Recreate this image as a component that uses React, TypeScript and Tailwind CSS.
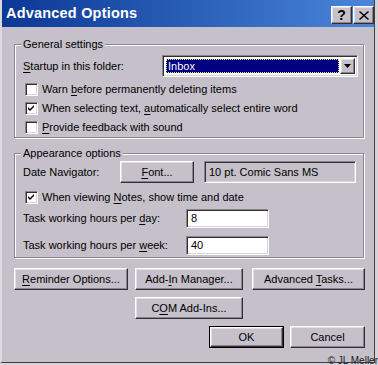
import React from "react";

const raised =
  "border border-t-white border-l-white border-r-[#303030] border-b-[#303030] shadow-[inset_-1px_-1px_0_#8a8590,inset_1px_1px_0_#e2dee6]";
const sunken =
  "border border-t-[#8a8590] border-l-[#8a8590] border-r-white border-b-white shadow-[inset_1px_1px_0_#303030,inset_-1px_-1px_0_#d8d4dc]";

function U({ children }: { children: React.ReactNode }) {
  return <span className="underline decoration-1 underline-offset-[2px]">{children}</span>;
}

function Check({ checked }: { checked?: boolean }) {
  return (
    <div className={`w-[13px] h-[13px] bg-white shrink-0 flex items-center justify-center ${sunken}`}>
      {checked && (
        <svg width="7" height="7" viewBox="0 0 7 7">
          <path d="M0 2 L2 4 L6 0 L6 2 L2 6 L0 4 Z" fill="#000" />
        </svg>
      )}
    </div>
  );
}

function Btn({ children, className = "" }: { children: React.ReactNode; className?: string }) {
  return (
    <div className={`h-[22px] flex items-center justify-center bg-[#c5c0c9] ${raised} ${className}`}>
      {children}
    </div>
  );
}

function Group({ title, className = "", children }: { title: string; className?: string; children: React.ReactNode }) {
  return (
    <div
      className={`relative w-[350px] border border-[#8a8590] shadow-[inset_1px_1px_0_white,1px_1px_0_white] ${className}`}
    >
      <span className="absolute left-[6px] top-[-8px] px-[2px] bg-[#c5c0c9] leading-[14px]">{title}</span>
      {children}
    </div>
  );
}

export default function App() {
  return (
    <div className="w-[378px] h-[365px] bg-[#d6d2da] relative overflow-hidden font-['Liberation_Sans',Arial,sans-serif] text-[11px] text-black">
      <div className="w-[375px] h-[363px] bg-[#c5c0c9] border-r border-b border-[#404040] border-l-2 border-l-[#dcd8e0] flex flex-col">
        {/* Title bar */}
        <div className="h-[27px] flex items-center bg-gradient-to-r from-[#0c3796] to-[#4a86d8] pl-[4px] pr-[0px] shrink-0">
          <span className="text-white font-bold text-[14.5px] tracking-[0.2px]">Advanced Options</span>
          <div className="ml-auto flex gap-[1px] mt-[3px]">
            <div className={`w-[21px] h-[18px] bg-[#c5c0c9] flex items-center justify-center font-bold text-[14px] leading-none ${raised}`}>
              ?
            </div>
            <div className={`w-[21px] h-[18px] bg-[#c5c0c9] flex items-center justify-center ${raised}`}>
              <svg width="10" height="9" viewBox="0 0 10 9">
                <path d="M1 0 L5 3.5 L9 0 L10 1 L6 4.5 L10 8 L9 9 L5 5.5 L1 9 L0 8 L4 4.5 L0 1 Z" fill="#000" />
              </svg>
            </div>
          </div>
        </div>

        <div className="pl-[12px] flex flex-col">
          {/* General settings */}
          <Group title="General settings" className="mt-[17px] h-[94px]">
            <div className="pl-[8px] pt-[10px]">
              <div className="flex items-center h-[22px]">
                <span className="w-[139px]">
                  <U>S</U>tartup in this folder:
                </span>
                <div className={`w-[196px] h-[22px] bg-white flex items-center p-[2px] ${sunken}`}>
                  <div className="flex-1 h-full p-[1px]">
                    <div className="h-full bg-[#000080] text-white flex items-center pl-[2px] outline-1 outline-dotted outline-[#e0e080] outline-offset-[-1px]">
                      Inbox
                    </div>
                  </div>
                  <div className={`w-[15px] h-full bg-[#c5c0c9] flex items-center justify-center ${raised}`}>
                    <svg width="7" height="4" viewBox="0 0 7 4">
                      <path d="M0 0 H7 L3.5 4 Z" fill="#000" />
                    </svg>
                  </div>
                </div>
              </div>
              <div className="mt-[3px] pl-[2px] flex flex-col">
                <div className="h-[19px] flex items-center gap-[4px]">
                  <Check />
                  <span>
                    Warn <U>b</U>efore permanently deleting items
                  </span>
                </div>
                <div className="h-[19px] flex items-center gap-[4px]">
                  <Check checked />
                  <span>
                    When selecting text, <U>a</U>utomatically select entire word
                  </span>
                </div>
                <div className="h-[19px] flex items-center gap-[4px]">
                  <Check />
                  <span>
                    <U>P</U>rovide feedback with sound
                  </span>
                </div>
              </div>
            </div>
          </Group>

          {/* Appearance options */}
          <Group title="Appearance options" className="mt-[15px] h-[105px]">
            <div className="pl-[8px] pt-[7px]">
              <div className="flex items-center h-[22px]">
                <span className="w-[97px]">Date Navigator:</span>
                <Btn className="w-[74px]">
                  <span>
                    <U>F</U>ont...
                  </span>
                </Btn>
                <div className={`ml-[10px] w-[152px] h-[22px] flex items-center pl-[4px] ${sunken} shadow-[inset_-1px_-1px_0_#d8d4dc,inset_1px_1px_0_#505050]`}>
                  10 pt. Comic Sans MS
                </div>
              </div>
              <div className="mt-[5px] h-[19px] flex items-center gap-[4px] pl-[2px]">
                <Check checked />
                <span>
                  When viewing <U>N</U>otes, show time and date
                </span>
              </div>
              <div className="mt-[2px] flex items-center h-[19px]">
                <span className="w-[163px]">
                  Task working hours per <U>d</U>ay:
                </span>
                <div className={`w-[83px] h-[19px] bg-white flex items-center pl-[4px] ${sunken}`}>8</div>
              </div>
              <div className="mt-[8px] flex items-center h-[19px]">
                <span className="w-[163px]">
                  Task working hours per <U>w</U>eek:
                </span>
                <div className={`w-[83px] h-[19px] bg-white flex items-center pl-[4px] ${sunken}`}>40</div>
              </div>
            </div>
          </Group>

          {/* Buttons */}
          <div className="mt-[10px] flex">
            <Btn className="w-[114px]">
              <span>
                <U>R</U>eminder Options...
              </span>
            </Btn>
            <Btn className="w-[108px] ml-[7px]">
              <span>
                Add-<U>I</U>n Manager...
              </span>
            </Btn>
            <Btn className="w-[113px] ml-[9px]">
              <span>
                Advanced <U>T</U>asks...
              </span>
            </Btn>
          </div>
          <div className="mt-[7px] flex pl-[121px]">
            <Btn className="w-[108px]">
              <span>
                C<U>O</U>M Add-Ins...
              </span>
            </Btn>
          </div>
          <div className="mt-[7px] flex pl-[195px]">
            <div className="w-[75px] h-[22px] border border-black">
              <Btn className="w-full h-full">OK</Btn>
            </div>
            <Btn className="w-[75px] ml-[6px]">Cancel</Btn>
          </div>
        </div>
      </div>
      <span className="absolute right-[0px] bottom-[-1px] text-[10px] leading-[11px] text-[#202020]">© JL Meller</span>
    </div>
  );
}
